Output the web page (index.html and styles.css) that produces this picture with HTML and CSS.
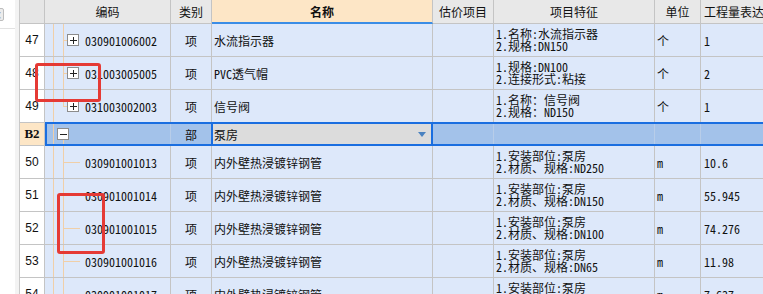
FILE: index.html
```html
<!DOCTYPE html>
<html lang="zh">
<head>
<meta charset="utf-8">
<link rel="stylesheet" href="styles.css">
</head>
<body>
<div class="side">
  <div class="closebtn">×</div>
  <div class="side-rule"></div>
</div>
<div class="grid">
  <div class="row hdr">
    <div class="rn"></div>
    <div class="c w-code">编码</div>
    <div class="c w-type">类别</div>
    <div class="c w-name">名称</div>
    <div class="c w-est">估价项目</div>
    <div class="c w-feat">项目特征</div>
    <div class="c w-unit">单位</div>
    <div class="c w-qty">工程量表达式</div>
  </div>

  <div class="row">
    <div class="rn">47</div>
    <div class="c w-code"><span class="conn"></span><svg class="box" width="12" height="12" viewBox="0 0 12 12"><rect x="0.5" y="0.5" width="11" height="11" fill="#fff" stroke="#8c8c8c"/><path d="M3 6.5H10M6.5 3V10" stroke="#222"/></svg><span class="code-t">030901006002</span></div>
    <div class="c w-type">项</div>
    <div class="c w-name">水流指示器</div>
    <div class="c w-est"></div>
    <div class="c w-feat"><div>1.名称:水流指示器<br>2.规格:DN150</div></div>
    <div class="c w-unit">个</div>
    <div class="c w-qty">1</div>
  </div>

  <div class="row">
    <div class="rn">48</div>
    <div class="c w-code"><span class="conn"></span><svg class="box" width="12" height="12" viewBox="0 0 12 12"><rect x="0.5" y="0.5" width="11" height="11" fill="#fff" stroke="#8c8c8c"/><path d="M3 6.5H10M6.5 3V10" stroke="#222"/></svg><span class="code-t">031003005005</span></div>
    <div class="c w-type">项</div>
    <div class="c w-name">PVC透气帽</div>
    <div class="c w-est"></div>
    <div class="c w-feat"><div>1.规格:DN100<br>2.连接形式:粘接</div></div>
    <div class="c w-unit">个</div>
    <div class="c w-qty">2</div>
  </div>

  <div class="row">
    <div class="rn">49</div>
    <div class="c w-code last"><span class="conn"></span><svg class="box" width="12" height="12" viewBox="0 0 12 12"><rect x="0.5" y="0.5" width="11" height="11" fill="#fff" stroke="#8c8c8c"/><path d="M3 6.5H10M6.5 3V10" stroke="#222"/></svg><span class="code-t">031003002003</span></div>
    <div class="c w-type">项</div>
    <div class="c w-name">信号阀</div>
    <div class="c w-est"></div>
    <div class="c w-feat"><div>1.名称：信号阀<br>2.规格：ND150</div></div>
    <div class="c w-unit">个</div>
    <div class="c w-qty">1</div>
  </div>

  <div class="row b2">
    <div class="rn">B2</div>
    <div class="cells">
      <div class="c w-code"><svg class="box" width="12" height="12" viewBox="0 0 12 12"><rect x="0.5" y="0.5" width="11" height="11" fill="#fff" stroke="#8c8c8c"/><path d="M3 6.5H10" stroke="#222"/></svg></div>
      <div class="c w-type">部</div>
      <div class="c w-name"><span>泵房</span><span class="dd"></span></div>
      <div class="c w-est"></div>
      <div class="c w-feat"></div>
      <div class="c w-unit"></div>
      <div class="c w-qty"></div>
    </div>
  </div>

  <div class="row">
    <div class="rn">50</div>
    <div class="c w-code"><span class="conn long"></span><span class="code-t leaf">030901001013</span></div>
    <div class="c w-type">项</div>
    <div class="c w-name">内外壁热浸镀锌钢管</div>
    <div class="c w-est"></div>
    <div class="c w-feat"><div>1.安装部位:泵房<br>2.材质、规格:ND250</div></div>
    <div class="c w-unit">m</div>
    <div class="c w-qty">10.6</div>
  </div>

  <div class="row">
    <div class="rn">51</div>
    <div class="c w-code"><span class="conn long"></span><span class="code-t leaf">030901001014</span></div>
    <div class="c w-type">项</div>
    <div class="c w-name">内外壁热浸镀锌钢管</div>
    <div class="c w-est"></div>
    <div class="c w-feat"><div>1.安装部位:泵房<br>2.材质、规格:DN150</div></div>
    <div class="c w-unit">m</div>
    <div class="c w-qty">55.945</div>
  </div>

  <div class="row">
    <div class="rn">52</div>
    <div class="c w-code"><span class="conn long"></span><span class="code-t leaf">030901001015</span></div>
    <div class="c w-type">项</div>
    <div class="c w-name">内外壁热浸镀锌钢管</div>
    <div class="c w-est"></div>
    <div class="c w-feat"><div>1.安装部位:泵房<br>2.材质、规格:DN100</div></div>
    <div class="c w-unit">m</div>
    <div class="c w-qty">74.276</div>
  </div>

  <div class="row">
    <div class="rn">53</div>
    <div class="c w-code"><span class="conn long"></span><span class="code-t leaf">030901001016</span></div>
    <div class="c w-type">项</div>
    <div class="c w-name">内外壁热浸镀锌钢管</div>
    <div class="c w-est"></div>
    <div class="c w-feat"><div>1.安装部位:泵房<br>2.材质、规格:DN65</div></div>
    <div class="c w-unit">m</div>
    <div class="c w-qty">11.98</div>
  </div>

  <div class="row">
    <div class="rn">54</div>
    <div class="c w-code"><span class="conn long"></span><span class="code-t leaf">030901001017</span></div>
    <div class="c w-type">项</div>
    <div class="c w-name">内外壁热浸镀锌钢管</div>
    <div class="c w-est"></div>
    <div class="c w-feat"><div>1.安装部位:泵房<br>2.材质、规格:DN50</div></div>
    <div class="c w-unit">m</div>
    <div class="c w-qty">7.637</div>
  </div>
</div>

<div class="mark mark-1"></div>
<div class="mark mark-2"></div>
</body>
</html>
```
FILE: styles.css
```css
* { box-sizing: border-box; margin: 0; padding: 0; }

body {
  width: 763px;
  height: 294px;
  overflow: hidden;
  background: #fff;
  display: flex;
  font-family: "Noto Sans Mono CJK SC", "Noto Sans CJK SC", monospace;
  font-size: 12px;
  color: #111;
  position: relative;
}

.side {
  width: 19px;
  flex: none;
  background: linear-gradient(to right, #fff 15px, #f3f3f3 15px);
  display: flex;
  flex-direction: column;
}

.closebtn {
  width: 13px;
  height: 13px;
  margin: 8px 0 0 -9px;
  border: 1px solid #bdbdbd;
  border-radius: 2px;
  background: #ececec;
  color: #888;
  font-size: 10px;
  line-height: 11px;
  text-align: center;
}

.side-rule {
  margin-top: 7px;
  width: 15px;
  height: 1px;
  background: #e2e2e2;
}

.grid {
  flex: none;
  width: 744px;
  display: flex;
  flex-direction: column;
}

.row {
  display: flex;
  height: 33px;
  flex: none;
}

.rn {
  width: 26px;
  flex: none;
  border-left: 1px solid #c9c9c9;
  border-right: 1px solid #c4c4c4;
  border-bottom: 1px solid #c4c4c4;
  background: #fff;
  display: flex;
  align-items: center;
  justify-content: center;
  font-family: "Liberation Sans", "Noto Sans CJK SC", sans-serif;
  font-size: 12px;
}

.c {
  flex: none;
  display: flex;
  align-items: center;
  border-right: 1px solid #c4c4c4;
  border-bottom: 1px solid #c4c4c4;
  background-color: #dde8fa;
  white-space: nowrap;
  overflow: hidden;
}

.w-code {
  width: 126px;
  padding-left: 18px;
  background-image: linear-gradient(#f0cfa8, #f0cfa8), linear-gradient(#f0cfa8, #f0cfa8);
  background-size: 1px 100%, 1px 100%;
  background-position: 8px 0, 18px 0;
  background-repeat: no-repeat;
}
.w-code.last { background-size: 1px 100%, 1px 50%; }

.w-type { width: 41px; justify-content: center; }
.w-name { width: 221px; padding-left: 2px; }
.w-est { width: 61px; }
.w-feat { width: 161px; padding-left: 2px; line-height: 12px; }
.w-unit { width: 46px; padding-left: 2px; }
.w-qty { width: 80px; padding-left: 3px; border-right: none; }

.conn {
  flex: none;
  width: 4px;
  height: 1px;
  background: #f0cfa8;
}
.conn.long { width: 17px; }

.box { flex: none; display: block; }

.code-t { margin-left: 6px; }
.code-t.leaf { margin-left: 5px; }

/* header */
.hdr { height: 24px; }
.hdr .rn { background: #e6e6e6; }
.hdr .c {
  background: #e8e8e8;
  justify-content: center;
  padding: 0;
  font-family: "Noto Sans CJK SC", sans-serif;
  font-size: 12px;
}
.hdr .w-code { background-image: none; }
.hdr .w-name {
  background: #fde6c6;
  font-weight: bold;
  border-bottom: 2px solid #3b8de6;
}
.hdr .w-qty { justify-content: flex-start; padding-left: 3px; }

/* selected section row */
.row.b2 {
  height: 24px;
  margin-top: -1px;
  position: relative;
}
.b2 .rn {
  border-top: 1px solid #c4c4c4;
  background: #fde6c6;
  font-weight: bold;
  font-family: "Liberation Serif", serif;
  font-size: 13px;
}
.b2 .cells {
  flex: 1;
  display: flex;
  border: 2px solid #1a6ee0;
  border-right: none;
  background: #a3c2ea;
}
.b2 .c {
  background-color: transparent;
  border-bottom: none;
  border-right-color: #b8cde9;
}
.b2 .w-code {
  width: 124px;
  padding-left: 10px;
  background-size: 1px 100%, 1px 4px;
  background-position: 6px 0, 16px 16px;
}
.b2 .w-type { width: 40px; border-right: none; }
.b2 .w-name {
  width: 222px;
  border-left: 2px solid #1a6ee0;
  border-right: 2px solid #1a6ee0;
  background-color: #dcdcdc;
  justify-content: space-between;
  padding: 0 5px 0 1px;
}
.dd {
  width: 0;
  height: 0;
  border-left: 4px solid transparent;
  border-right: 4px solid transparent;
  border-top: 5px solid #4a82c0;
}

/* red annotation marks */
.mark {
  position: absolute;
  border: 3px solid #e53a35;
  border-radius: 3px;
}
.mark-1 { left: 35px; top: 63px; width: 66px; height: 39px; }
.mark-2 { left: 57px; top: 193px; width: 48px; height: 61px; }
```
